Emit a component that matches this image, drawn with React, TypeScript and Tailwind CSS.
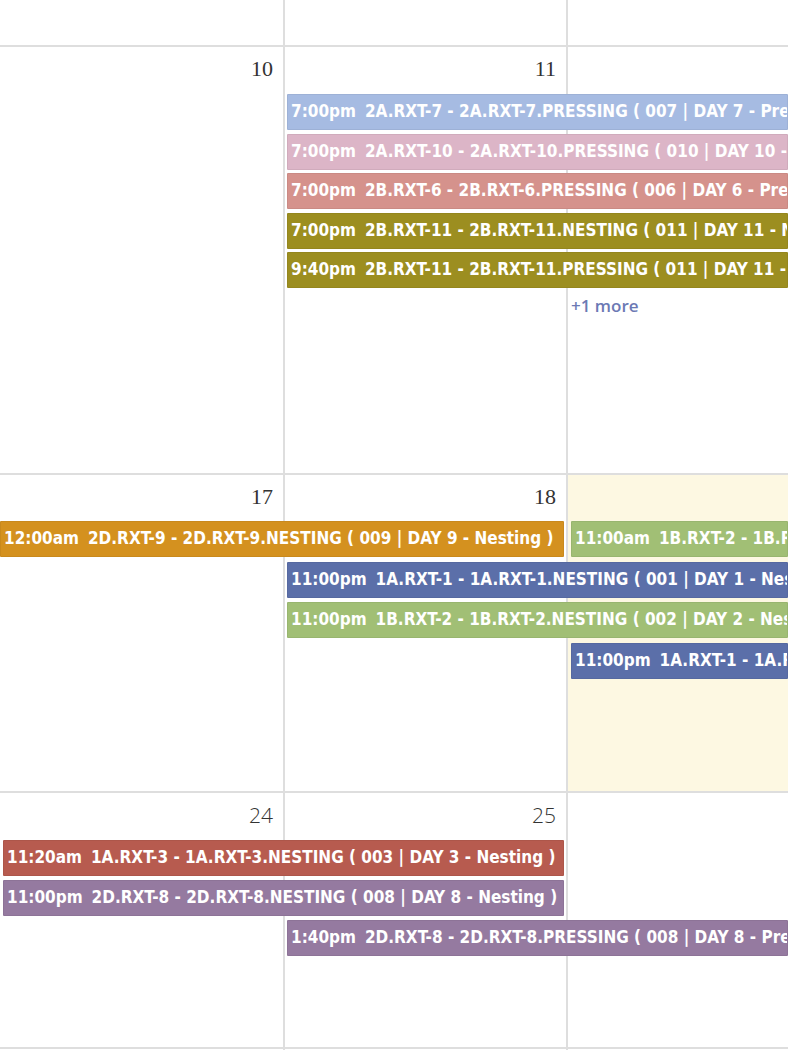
import React from 'react';

type Ev = {
  col: string;
  row: string;
  color: string;
  time: string;
  title: string;
  edge?: string;
};

const font = { fontFamily: '"DejaVu Sans Condensed", "Liberation Sans", sans-serif' };

function EventBar({ ev }: { ev: Ev }) {
  return (
    <div
      className={`${ev.col} ${ev.row} ${ev.color} ${ev.edge ?? 'ml-[2px] mr-[3px]'} z-10 flex h-[36px] items-center overflow-hidden whitespace-nowrap rounded-[1px] border border-black/5 pl-[3px] text-[17px] font-bold text-white`}
      style={font}
    >
      <span className="mr-[9px]">{ev.time}</span>
      <span>{ev.title}</span>
    </div>
  );
}

function DayCell({
  col,
  num,
  numFont,
  today,
  last,
}: {
  col: string;
  num?: string;
  numFont?: string;
  today?: boolean;
  last?: boolean;
}) {
  return (
    <div
      className={`${col} row-span-full ${last ? '' : 'border-r-2'} border-[#dedede] ${today ? 'bg-[#fdf8e2]' : 'bg-white'} flex justify-end pr-[10px] pt-[8px]`}
    >
      {num && <span className={`text-[21px] leading-[28px] text-[#333] ${numFont}`}>{num}</span>}
    </div>
  );
}

const serif = "[font-family:'Liberation_Serif',serif] text-[22px]";
const sans = "[font-family:'Open_Sans',sans-serif] font-light";

const week1: Ev[] = [
  { col: 'col-start-2 col-span-2', row: 'row-start-2', color: 'bg-[#a6bbe2]', time: '7:00pm', title: '2A.RXT-7 - 2A.RXT-7.PRESSING ( 007 | DAY 7 - Pressing )', edge: 'ml-[2px]' },
  { col: 'col-start-2 col-span-2', row: 'row-start-3', color: 'bg-[#dcb5c7]', time: '7:00pm', title: '2A.RXT-10 - 2A.RXT-10.PRESSING ( 010 | DAY 10 - Pressing )', edge: 'ml-[2px]' },
  { col: 'col-start-2 col-span-2', row: 'row-start-4', color: 'bg-[#d5928c]', time: '7:00pm', title: '2B.RXT-6 - 2B.RXT-6.PRESSING ( 006 | DAY 6 - Pressing )', edge: 'ml-[2px]' },
  { col: 'col-start-2 col-span-2', row: 'row-start-5', color: 'bg-[#9c8e20]', time: '7:00pm', title: '2B.RXT-11 - 2B.RXT-11.NESTING ( 011 | DAY 11 - Nesting )', edge: 'ml-[2px]' },
  { col: 'col-start-2 col-span-2', row: 'row-start-6', color: 'bg-[#9c8e20]', time: '9:40pm', title: '2B.RXT-11 - 2B.RXT-11.PRESSING ( 011 | DAY 11 - Pressing )', edge: 'ml-[2px]' },
];

const week2: Ev[] = [
  { col: 'col-start-1 col-span-2', row: 'row-start-2', color: 'bg-[#d4911f]', time: '12:00am', title: '2D.RXT-9 - 2D.RXT-9.NESTING ( 009 | DAY 9 - Nesting )', edge: 'mr-[4px]' },
  { col: 'col-start-3', row: 'row-start-2', color: 'bg-[#a1bf75]', time: '11:00am', title: '1B.RXT-2 - 1B.RXT-2.PRESSING ( 002 | DAY 2 - Pressing )', edge: 'ml-[3px]' },
  { col: 'col-start-2 col-span-2', row: 'row-start-3', color: 'bg-[#5b6fa9]', time: '11:00pm', title: '1A.RXT-1 - 1A.RXT-1.NESTING ( 001 | DAY 1 - Nesting )', edge: 'ml-[2px]' },
  { col: 'col-start-2 col-span-2', row: 'row-start-4', color: 'bg-[#a1bf75]', time: '11:00pm', title: '1B.RXT-2 - 1B.RXT-2.NESTING ( 002 | DAY 2 - Nesting )', edge: 'ml-[2px]' },
  { col: 'col-start-3', row: 'row-start-5', color: 'bg-[#5b6fa9]', time: '11:00pm', title: '1A.RXT-1 - 1A.RXT-1.PRESSING ( 001 | DAY 1 - Pressing )', edge: 'ml-[3px]' },
];

const week3: Ev[] = [
  { col: 'col-start-1 col-span-2', row: 'row-start-2', color: 'bg-[#b75b4f]', time: '11:20am', title: '1A.RXT-3 - 1A.RXT-3.NESTING ( 003 | DAY 3 - Nesting )', edge: 'ml-[3px] mr-[4px]' },
  { col: 'col-start-1 col-span-2', row: 'row-start-3', color: 'bg-[#957aa0]', time: '11:00pm', title: '2D.RXT-8 - 2D.RXT-8.NESTING ( 008 | DAY 8 - Nesting )', edge: 'ml-[3px] mr-[4px]' },
  { col: 'col-start-2 col-span-2', row: 'row-start-4', color: 'bg-[#957aa0]', time: '1:40pm', title: '2D.RXT-8 - 2D.RXT-8.PRESSING ( 008 | DAY 8 - Pressing )', edge: 'ml-[2px]' },
];

export default function App() {
  return (
    <div className="h-[1050px] w-[788px] overflow-hidden bg-white">
      <div className="grid h-[47px] grid-cols-[285px_283px_1fr] border-b-2 border-[#dedede]">
        <div className="border-r-2 border-[#dedede]" />
        <div className="border-r-2 border-[#dedede]" />
        <div />
      </div>

      <div className="grid h-[428px] grid-cols-[285px_283px_1fr] grid-rows-[47px_39.5px_39.5px_39.5px_39.5px_39.5px_40px_1fr] border-b-2 border-[#dedede]">
        <DayCell col="col-start-1" num="10" numFont={serif} />
        <DayCell col="col-start-2" num="11" numFont={serif} />
        <DayCell col="col-start-3" last />
        {week1.map((ev, i) => (
          <EventBar key={i} ev={ev} />
        ))}
        <div className="col-start-3 row-start-7 z-10 pl-[3px] pt-[1px] text-[17px] font-semibold text-[#6c79b4]" style={{ fontFamily: '"Open Sans", sans-serif' }}>
          +1 more
        </div>
      </div>

      <div className="grid h-[318px] grid-cols-[285px_283px_1fr] grid-rows-[46px_40.5px_40.5px_40.5px_40.5px_1fr] border-b-2 border-[#dedede]">
        <DayCell col="col-start-1" num="17" numFont={serif} />
        <DayCell col="col-start-2" num="18" numFont={serif} />
        <DayCell col="col-start-3" today last />
        {week2.map((ev, i) => (
          <EventBar key={i} ev={ev} />
        ))}
      </div>

      <div className="grid h-[256px] grid-cols-[285px_283px_1fr] grid-rows-[47px_40px_40px_40px_1fr] border-b-2 border-[#dedede]">
        <DayCell col="col-start-1" num="24" numFont={sans} />
        <DayCell col="col-start-2" num="25" numFont={sans} />
        <DayCell col="col-start-3" last />
        {week3.map((ev, i) => (
          <EventBar key={i} ev={ev} />
        ))}
      </div>

      <div className="grid h-[10px] grid-cols-[285px_283px_1fr]">
        <div className="border-r-2 border-[#dedede]" />
        <div className="border-r-2 border-[#dedede]" />
        <div />
      </div>
    </div>
  );
}
